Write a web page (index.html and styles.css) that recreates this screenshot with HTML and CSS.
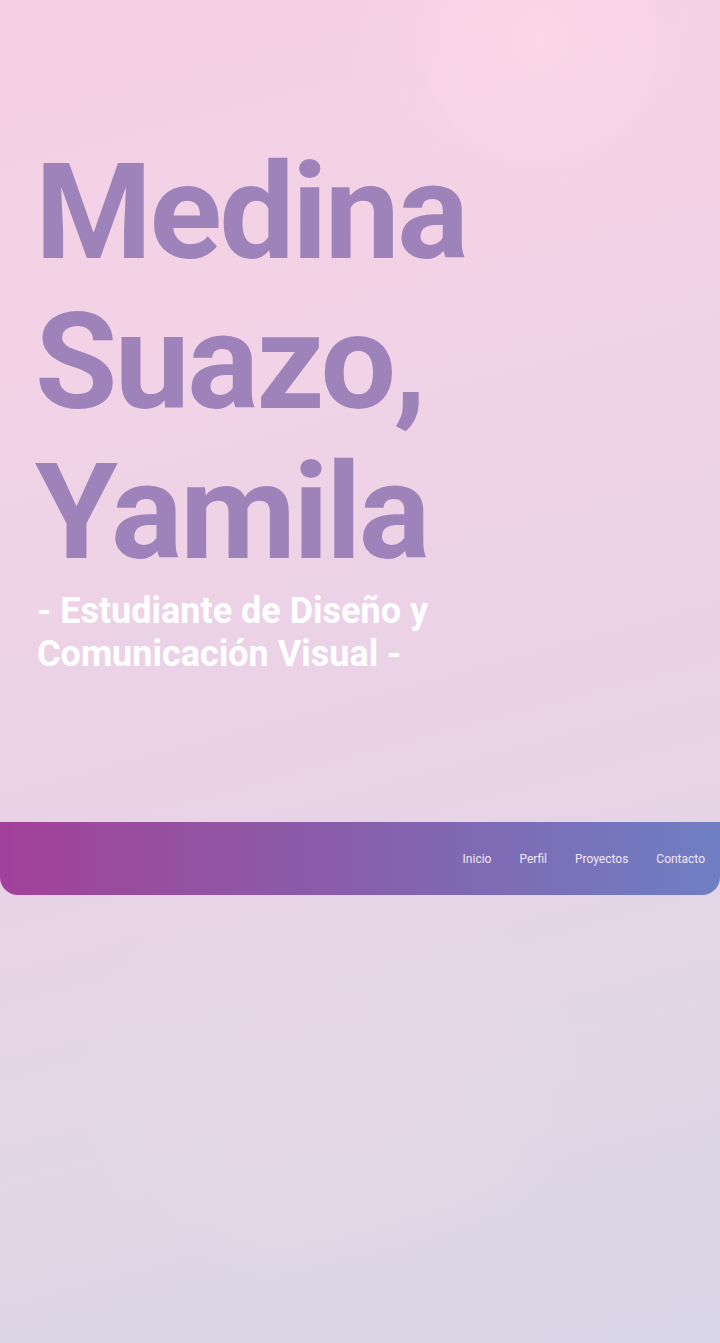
FILE: index.html
```html
<!DOCTYPE html>
<html lang="es">
<head>
<meta charset="utf-8">
<title>Medina Suazo, Yamila</title>
<link rel="stylesheet" href="styles.css">
</head>
<body>
<div class="page">
  <header class="hero">
    <h1 class="name">Medina<br>Suazo,<br>Yamila</h1>
    <p class="role">- Estudiante de Diseño y<br>Comunicación Visual -</p>
  </header>
  <nav class="nav">
    <a href="#" class="nav-link">Inicio</a>
    <a href="#" class="nav-link">Perfil</a>
    <a href="#" class="nav-link">Proyectos</a>
    <a href="#" class="nav-link">Contacto</a>
  </nav>
</div>
</body>
</html>
```
FILE: styles.css
```css
html, body {
  margin: 0;
  padding: 0;
}
body {
  min-height: 1343px;
  font-family: Roboto, "Liberation Sans", sans-serif;
  background:
    radial-gradient(ellipse 190px 200px at 540px 40px, rgba(255, 220, 232, 0.6), rgba(255, 220, 232, 0) 100%),
    radial-gradient(ellipse 260px 220px at 330px 1080px, rgba(236, 216, 230, 0.35), rgba(236, 216, 230, 0) 100%),
    linear-gradient(165deg, #f5cfe4 0%, #f3d2e6 25%, #e9d2e6 55%, #e2d6e6 75%, #d9d6e7 100%);
}
.page {
  display: flex;
  flex-direction: column;
}
.hero {
  padding: 138px 0 0 35px;
}
.name {
  margin: 0;
  font-size: 134px;
  line-height: 150px;
  font-weight: 700;
  color: #9e83bb;
  letter-spacing: -2.7px;
}
.role {
  margin: 2px 0 0;
  font-size: 36px;
  line-height: 43px;
  font-weight: 700;
  color: #ffffff;
  padding-left: 2px;
}
.nav {
  margin-top: 146px;
  height: 73px;
  display: flex;
  justify-content: flex-end;
  align-items: center;
  gap: 28px;
  padding-right: 15px;
  border-radius: 0 0 18px 18px;
  background: linear-gradient(90deg, #a2409a 0%, #9551a0 25%, #875fac 50%, #7a6fb8 75%, #6f7fc3 100%);
}
.nav-link {
  color: #f1e6f6;
  text-decoration: none;
  font-size: 12px;
  line-height: 16px;
}
```
